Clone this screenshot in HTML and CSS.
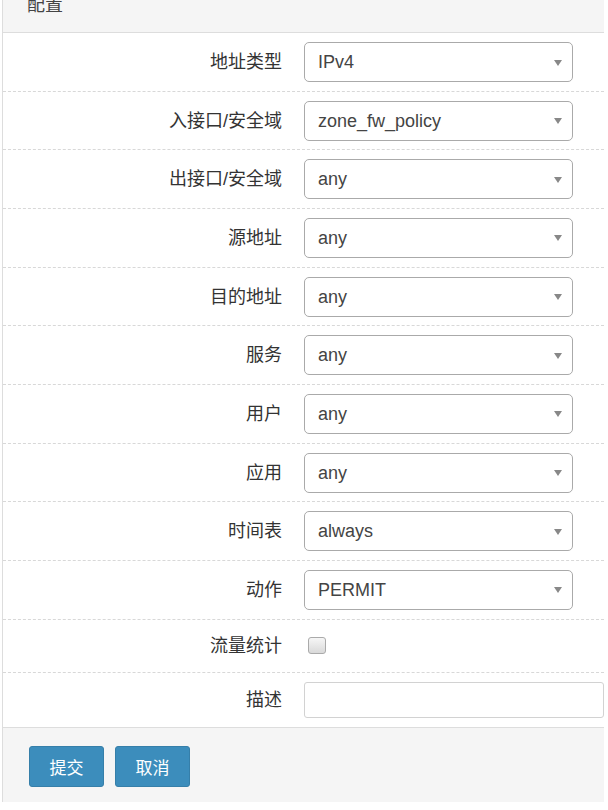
FILE: index.html
```html
<!DOCTYPE html>
<html lang="zh-CN">

<head>
    <meta charset="UTF-8">
    <meta name="viewport" content="width=device-width, initial-scale=1.0">
    <title>配置</title>
    <link rel="stylesheet" href="styles.css">
</head>

<body>
    <section class="panel">
        <div class="panel-head">配置</div>

        <form class="panel-body">
            <div class="row">
                <label class="row-label">地址类型</label>
                <div class="select"><span>IPv4</span><i class="caret"></i></div>
            </div>
            <div class="row">
                <label class="row-label">入接口/安全域</label>
                <div class="select"><span>zone_fw_policy</span><i class="caret"></i></div>
            </div>
            <div class="row">
                <label class="row-label">出接口/安全域</label>
                <div class="select"><span>any</span><i class="caret"></i></div>
            </div>
            <div class="row">
                <label class="row-label">源地址</label>
                <div class="select"><span>any</span><i class="caret"></i></div>
            </div>
            <div class="row">
                <label class="row-label">目的地址</label>
                <div class="select"><span>any</span><i class="caret"></i></div>
            </div>
            <div class="row">
                <label class="row-label">服务</label>
                <div class="select"><span>any</span><i class="caret"></i></div>
            </div>
            <div class="row">
                <label class="row-label">用户</label>
                <div class="select"><span>any</span><i class="caret"></i></div>
            </div>
            <div class="row">
                <label class="row-label">应用</label>
                <div class="select"><span>any</span><i class="caret"></i></div>
            </div>
            <div class="row">
                <label class="row-label">时间表</label>
                <div class="select"><span>always</span><i class="caret"></i></div>
            </div>
            <div class="row">
                <label class="row-label">动作</label>
                <div class="select"><span>PERMIT</span><i class="caret"></i></div>
            </div>
            <div class="row row-check">
                <label class="row-label">流量统计</label>
                <div class="check-wrap"><span class="checkbox"></span></div>
            </div>
            <div class="row row-last">
                <label class="row-label">描述</label>
                <input class="text-input" type="text">
            </div>
        </form>

        <div class="panel-foot">
            <button class="btn">提交</button>
            <button class="btn">取消</button>
        </div>
    </section>
</body>

</html>
```

FILE: styles.css
```css
body {
    margin: 0;
    background-color: #fff;
    font-family: "Liberation Sans", "Noto Sans CJK SC", sans-serif;
    color: #333;
}

.panel {
    margin: -15px 0 0 2px;
    width: 601px;
    border-left: 1px solid #ddd;
}

.panel-head {
    padding: 10px 24px 17px;
    line-height: 20px;
    font-size: 18px;
    color: #444;
    background-color: #f5f5f5;
    border-bottom: 1px solid #ddd;
}

.panel-body {
    margin: 0;
}

.row {
    display: grid;
    grid-template-columns: 279px 1fr;
    column-gap: 22px;
    align-items: center;
    padding: 9px 0 8.67px;
    border-bottom: 1px dashed #d8d8d8;
}

.row-label {
    text-align: right;
    font-size: 18px;
    line-height: 40px;
    color: #333;
}

.select {
    display: flex;
    align-items: center;
    justify-content: space-between;
    box-sizing: border-box;
    width: 269px;
    height: 40px;
    padding: 1px 10px 0 13px;
    border: 1px solid #aaa;
    border-radius: 5px;
    font-size: 18px;
    color: #444;
    background-color: #fff;
}

.caret {
    width: 0;
    height: 0;
    border-top: 6px solid #888;
    border-left: 4px solid transparent;
    border-right: 4px solid transparent;
}

.row-check {
    padding: 9px 0;
}

.row-check .row-label {
    line-height: 34px;
}

.check-wrap {
    display: flex;
    align-items: center;
    height: 34px;
}

.checkbox {
    box-sizing: border-box;
    width: 18px;
    height: 17px;
    margin-left: 4px;
    border: 1px solid #aaa;
    border-radius: 3px;
    background: linear-gradient(#f6f6f6, #d9d9d9);
}

.row-last {
    padding: 9px 0;
    border-bottom: none;
}

.row-last .row-label {
    line-height: 36px;
}

.text-input {
    box-sizing: border-box;
    width: 100%;
    height: 36px;
    margin: 0;
    border: 1px solid #d2d2d2;
    border-radius: 3px;
    outline: none;
}

.panel-foot {
    display: flex;
    gap: 11px;
    padding: 18px 26px 15px;
    background-color: #f5f5f5;
    border-top: 1px solid #ddd;
}

.btn {
    width: 75px;
    height: 41px;
    border: 1px solid #367fa9;
    border-radius: 3px;
    background-color: #3c8dbc;
    color: #fff;
    font-family: "Liberation Sans", "Noto Sans CJK SC", sans-serif;
    font-size: 17px;
    cursor: pointer;
}
```
